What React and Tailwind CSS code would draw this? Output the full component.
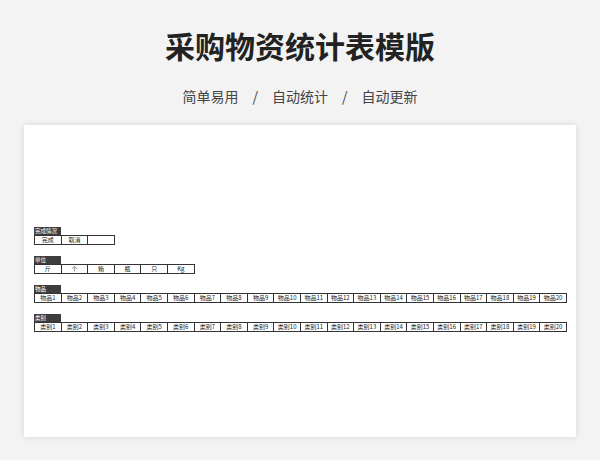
const font = { fontFamily: '"Noto Sans CJK SC", "Noto Sans", sans-serif' };

const Section = ({ label, items, mt }) => (
  <div className={mt}>
    <div className="w-[27px] h-[8px] bg-[#3d3d3d] text-white text-[5.5px] leading-[8px] pl-[1px] whitespace-nowrap overflow-hidden">
      {label}
    </div>
    <div className="flex">
      {items.map((t, i) => (
        <div
          key={i}
          className="w-[27.6px] h-[10px] border border-[#333] -ml-px first:ml-0 text-[6px] leading-[8px] text-center text-[#222] whitespace-nowrap bg-white"
        >
          {t}
        </div>
      ))}
    </div>
  </div>
);

const range = (p) => Array.from({ length: 20 }, (_, i) => `${p}${i + 1}`);

export default function App() {
  return (
    <div className="w-[600px] h-[460px] bg-[#f3f3f3] flex flex-col items-center overflow-hidden" style={font}>
      <h1 className="mt-[24px] text-[30px] leading-[42px] font-bold text-[#222]">采购物资统计表模版</h1>
      <div className="mt-[20px] flex items-center gap-[14px] text-[14px] leading-[20px] text-[#444]">
        <span>简单易用</span>
        <span>/</span>
        <span>自动统计</span>
        <span>/</span>
        <span>自动更新</span>
      </div>
      <div className="mt-[19px] w-[552px] h-[312px] bg-white shadow-[0_0_6px_rgba(0,0,0,0.12)] pl-[10px] pt-[102px]">
        <Section label="完成情况" items={['完成', '取消', '']} />
        <Section label="单位" items={['斤', '个', '箱', '瓶', '只', 'Kg']} mt="mt-[11px]" />
        <Section label="物品" items={range('物品')} mt="mt-[11px]" />
        <Section label="类别" items={range('类别')} mt="mt-[11px]" />
      </div>
    </div>
  );
}
